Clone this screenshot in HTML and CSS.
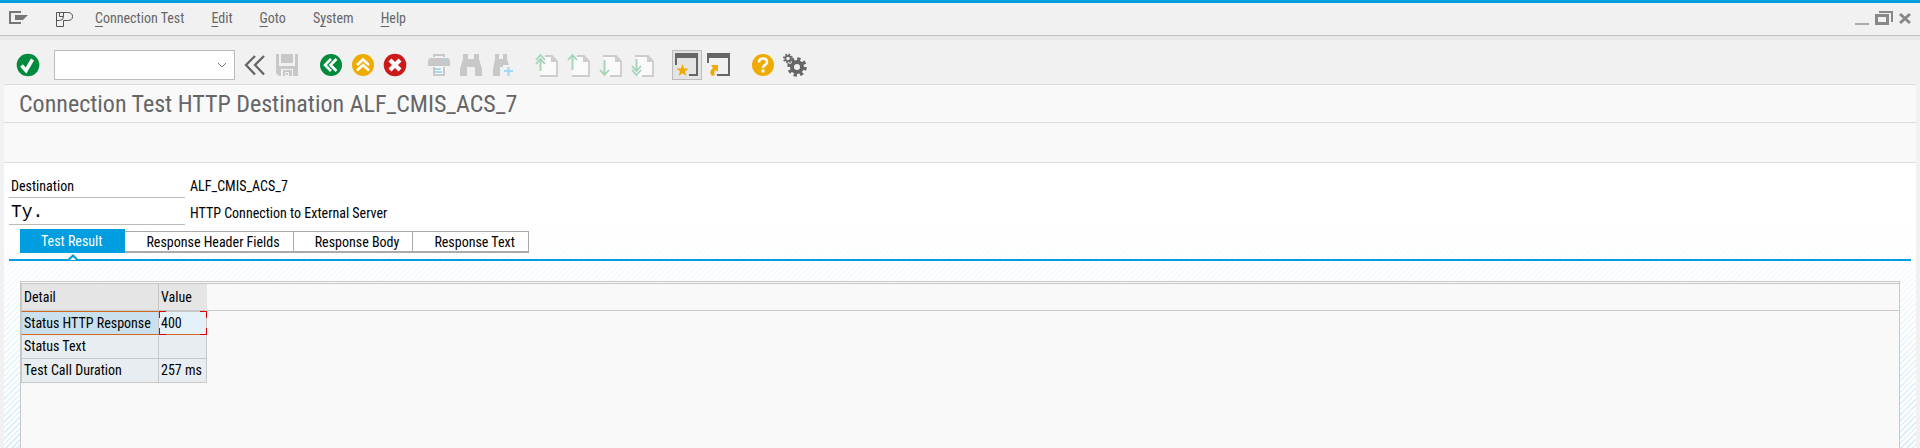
FILE: index.html
```html
<!DOCTYPE html>
<html lang="en">
<head>
<meta charset="utf-8">
<title>Connection Test HTTP Destination ALF_CMIS_ACS_7</title>
<link rel="stylesheet" href="styles.css">
</head>
<body>
<header class="menubar">
  <button class="icon-btn sys" aria-label="Window menu"><svg width="19" height="14" viewBox="0 0 19 14"><path d="M12 1H1v11h11" fill="none" stroke="#777" stroke-width="2"/><path d="M6 4h13l-5 5H6z" fill="#777"/></svg></button>
  <button class="icon-btn app" aria-label="Session"><svg width="18" height="17" viewBox="0 0 18 17"><path d="M.5 1.500h11q5 0 5 4t-5 4h-4v6h-7zM.5 9.500h3q4 0 4-4v-4M3.500 1.500v4h4" fill="none" stroke="#555"/></svg></button>
  <nav class="menus">
    <button class="menu"><u>C</u>onnection Test</button>
    <button class="menu"><u>E</u>dit</button>
    <button class="menu"><u>G</u>oto</button>
    <button class="menu">S<u>y</u>stem</button>
    <button class="menu"><u>H</u>elp</button>
  </nav>
  <div class="window-controls">
    <button class="icon-btn" aria-label="Minimize"><svg width="14" height="14" viewBox="0 0 14 14"><path d="M0 12h14v2H0z" fill="#aaa"/></svg></button>
    <button class="icon-btn" aria-label="Restore"><svg width="18" height="14" viewBox="0 0 18 14"><path d="M4 1h13v10" fill="none" stroke="#888" stroke-width="2"/><path d="M1.500 4.500h11v8h-11z" fill="none" stroke="#888" stroke-width="3"/></svg></button>
    <button class="icon-btn" aria-label="Close"><svg width="12" height="14" viewBox="0 0 12 14"><path d="M1 3l10 9M11 3L1 12" stroke="#888" stroke-width="3"/></svg></button>
  </div>
</header>

<div class="toolbar">
  <div class="group">
    <button class="icon-btn tool" aria-label="Enter"><svg width="24" height="24" viewBox="0 0 24 24"><circle cx="12" cy="12" r="11.300" fill="#008a3b"/><path d="M5.500 12.500l4.500 5 6.500-11" fill="none" stroke="#fff" stroke-width="3.600"/></svg></button>
  </div>
  <div class="command">
    <select class="command-field" aria-label="Command"><option></option></select>
    <svg class="chevron" width="10" height="7" viewBox="0 0 10 7"><path d="M1 1l4 4 4-4" fill="none" stroke="#777"/></svg>
  </div>
  <div class="group">
    <button class="icon-btn tool" aria-label="Collapse"><svg width="24" height="24" viewBox="0 0 24 24"><path d="M12 3L3 12l9 9.500M21 3l-9 9 9 9.500" fill="none" stroke="#666" stroke-width="2.300"/></svg></button>
    <button class="icon-btn tool" aria-label="Save"><svg width="24" height="24" viewBox="0 0 24 24"><path d="M1 1h3v12h16V1h3v22h-5v-7H6v7H4l-3-3z" fill="#c8c8c8"/><path d="M6 1h12v9H6zM8 17h9v6H8z" fill="#c8c8c8"/><path d="M10.500 19.500h3v3h-3z" fill="none" stroke="#f1f1f1"/></svg></button>
  </div>
  <div class="group">
    <button class="icon-btn tool" aria-label="Back"><svg width="24" height="24" viewBox="0 0 24 24"><circle cx="12" cy="12" r="11" fill="#008a3b"/><path d="M12 6l-6 6 6 6M17.500 6l-6 6 6 6" fill="none" stroke="#fff" stroke-width="2.600"/></svg></button>
    <button class="icon-btn tool" aria-label="Exit"><svg width="24" height="24" viewBox="0 0 24 24"><circle cx="12" cy="12" r="11" fill="#f0ab00"/><path d="M6 12l6-5.500 6 5.500M6 17.500l6-5.500 6 5.500" fill="none" stroke="#fff" stroke-width="2.600"/></svg></button>
    <button class="icon-btn tool" aria-label="Cancel"><svg width="24" height="24" viewBox="0 0 24 24"><circle cx="12" cy="12" r="11.300" fill="#cc1919"/><path d="M7 7l10 10M17 7l-10 10" stroke="#fff" stroke-width="4.200"/></svg></button>
  </div>
  <div class="group">
    <button class="icon-btn tool" aria-label="Print" disabled><svg width="24" height="24" viewBox="0 0 24 24"><path d="M7 4V2h10v2" fill="none" stroke="#c8c8c8" stroke-width="2"/><path d="M3 5h18l2 2v6H1V7z" fill="#c8c8c8"/><path d="M18 7h3v2h-3z" fill="#a5d8f3"/><path d="M7 14v8h10v-8" fill="#fafafa" stroke="#c8c8c8" stroke-width="2"/><path d="M8 16h6M8 19h7" stroke="#a5d8f3" stroke-width="2"/></svg></button>
    <button class="icon-btn tool" aria-label="Find" disabled><svg width="24" height="24" viewBox="0 0 24 24"><path d="M4 1h5v5h6V1h5v5l3 10v7h-7v-9H8v9H1v-7L4 6z" fill="#c8c8c8"/></svg></button>
    <button class="icon-btn tool" aria-label="Find next" disabled><svg width="24" height="24" viewBox="0 0 24 24"><path d="M4 1h4v5h4V1h4v5l2 6h-6v2H9v9H2v-7l2-10z" fill="#c8c8c8"/><path d="M13 18h9M17.500 14v9" stroke="#a5d8f3" stroke-width="2.200"/></svg></button>
  </div>
  <div class="group">
    <button class="icon-btn tool" aria-label="First page" disabled><svg width="24" height="24" viewBox="0 0 24 24"><path d="M5 23V13l5-10h7l5 5v15z" fill="#fafafa"/><path d="M10 3h7l5 5v15H5" fill="none" stroke="#ccc" stroke-width="1.800"/><path d="M16 3v6h6z" fill="#ccc"/><path d="M1 7l4.500-5L10 7M1 11l4.500-5 4.500 5M5.500 6v12" fill="none" stroke="#a5d3b8" stroke-width="1.800"/></svg></button>
    <button class="icon-btn tool" aria-label="Previous page" disabled><svg width="24" height="24" viewBox="0 0 24 24"><path d="M5 23V13l5-10h7l5 5v15z" fill="#fafafa"/><path d="M10 3h7l5 5v15H5" fill="none" stroke="#ccc" stroke-width="1.800"/><path d="M16 3v6h6z" fill="#ccc"/><path d="M1 7l4.500-5L10 7M5.500 2v15" fill="none" stroke="#a5d3b8" stroke-width="1.800"/></svg></button>
    <button class="icon-btn tool" aria-label="Next page" disabled><svg width="24" height="24" viewBox="0 0 24 24"><path d="M5 3h12l5 5v15H5z" fill="#fafafa"/><path d="M4 3h13l5 5v15H11" fill="none" stroke="#ccc" stroke-width="1.800"/><path d="M16 3v6h6z" fill="#ccc"/><path d="M1 17l4.500 5L10 17M5.500 7v14" fill="none" stroke="#a5d3b8" stroke-width="1.800"/></svg></button>
    <button class="icon-btn tool" aria-label="Last page" disabled><svg width="24" height="24" viewBox="0 0 24 24"><path d="M5 3h12l5 5v15H5z" fill="#fafafa"/><path d="M4 3h13l5 5v15H11" fill="none" stroke="#ccc" stroke-width="1.800"/><path d="M16 3v6h6z" fill="#ccc"/><path d="M1 17l4.500 5L10 17M1 13l4.500 5L10 13M5.500 6v11" fill="none" stroke="#a5d3b8" stroke-width="1.800"/></svg></button>
  </div>
  <div class="group sessions">
    <button class="icon-btn tool framed" aria-label="New session"><svg width="24" height="24" viewBox="0 0 24 24"><path d="M0 0h23v23h-9v-2h7V5H2v7H0z" fill="#666"/><path d="M7.500 11l1.600 4.400h4.700l-3.800 2.900 1.400 4.700-3.900-2.800L3.600 23 5 18.300l-3.800-2.900h4.700z" fill="#f0ab00"/></svg></button>
    <button class="icon-btn tool" aria-label="Create shortcut"><svg width="24" height="24" viewBox="0 0 24 24"><path d="M0 0h23v23h-13v-2h11V5H2v5H0z" fill="#666"/><path d="M4 12h7v7l-2-2q-3 2-1 5l-3 1q-4-4 1-8z" fill="#f0ab00"/></svg></button>
  </div>
  <div class="group">
    <button class="icon-btn tool" aria-label="Help"><svg width="24" height="24" viewBox="0 0 24 24"><circle cx="12" cy="12" r="11" fill="#f0ab00"/><path d="M8 9.500q0-4 4-4t4 3.500q0 2-2 3t-2 3" fill="none" stroke="#fff" stroke-width="2.600"/><path d="M10.500 16.500h3v3h-3z" fill="#fff"/></svg></button>
    <button class="icon-btn tool" aria-label="Customize layout"><svg width="24" height="24" viewBox="0 0 24 24"><circle cx="14" cy="14" r="5" fill="none" stroke="#666" stroke-width="4"/><circle cx="14" cy="14" r="8" fill="none" stroke="#666" stroke-width="3.500" stroke-dasharray="3.200 3.083"/><circle cx="5" cy="5.500" r="2.600" fill="none" stroke="#666" stroke-width="1.600"/><circle cx="5" cy="5.500" r="4" fill="none" stroke="#666" stroke-width="2" stroke-dasharray="1.600 1.541"/></svg></button>
  </div>
</div>

<main class="screen">
  <h1 class="title">Connection Test HTTP Destination ALF_CMIS_ACS_7</h1>
  <div class="app-toolbar"></div>
  <section class="content">
    <dl class="fields">
      <dt class="label">Destination</dt><dd class="value">ALF_CMIS_ACS_7</dd>
      <dt class="label mono">Ty.</dt><dd class="value">HTTP Connection to External Server</dd>
    </dl>
    <div class="tabs" role="tablist">
      <button class="tab active" role="tab" aria-selected="true">Test Result<svg class="caret" width="12" height="6" viewBox="0 0 12 6"><path d="M0 6l6-6 6 6z" fill="#009de0"/><path d="M3 6l3-3 3 3z" fill="#fff"/></svg></button>
      <button class="tab" role="tab">Response Header Fields</button>
      <button class="tab" role="tab">Response Body</button>
      <button class="tab" role="tab">Response Text</button>
    </div>
    <div class="panel">
      <div class="grid">
        <table class="results">
          <thead><tr><th>Detail</th><th>Value</th><td class="rest"></td></tr></thead>
          <tbody>
            <tr class="selected"><td>Status HTTP Response</td><td class="focus">400</td></tr>
            <tr><td>Status Text</td><td></td></tr>
            <tr><td>Test Call Duration</td><td>257 ms</td></tr>
          </tbody>
        </table>
      </div>
    </div>
  </section>
</main>
</body>
</html>
```
FILE: styles.css
```css
* { box-sizing: border-box; }

body {
  margin: 0;
  min-height: 100vh;
  display: flex;
  flex-direction: column;
  background: #f1f1f1;
  color: #000;
  font: 14px/20px "Arial Narrow", "Roboto Condensed", "Liberation Sans", sans-serif;
}

button, select {
  margin: 0;
  padding: 0;
  border: 0;
  background: none;
  color: inherit;
  font: inherit;
}

svg { display: block; }

.menubar {
  display: flex;
  align-items: center;
  height: 36px;
  padding: 0 9px;
  border-top: 3px solid #009de0;
  border-bottom: 1px solid #bfbfbf;
  color: #666;
}
.sys { padding-bottom: 2px; }
.app { margin-left: 28px; }
.menus { display: flex; gap: 27px; margin-left: 21px; padding-bottom: 2px; }
.menu u { text-underline-offset: 3px; }
.window-controls { display: flex; gap: 6px; margin-left: auto; padding-bottom: 3px; }

.toolbar {
  display: flex;
  align-items: center;
  gap: 20px;
  height: 48px;
  padding: 6px 16px 0;
  border-top: 4px solid #e9e9e9;
}
.group { display: flex; align-items: center; gap: 8px; }
.command { display: grid; align-items: center; width: 181px; margin: 0 -12px 0 -6px; }
.command-field {
  grid-area: 1 / 1;
  width: 100%;
  height: 30px;
  border: 1px solid #bbb;
  background: #fff;
  appearance: none;
}
.chevron { grid-area: 1 / 1; justify-self: end; margin-right: 8px; pointer-events: none; }
.sessions { gap: 5px; margin-left: -3px; }
.framed { padding: 2px; border: 1px solid #bbb; background: #e4e4e4; }

.screen {
  display: flex;
  flex: 1;
  flex-direction: column;
  margin: 0 4px;
  border-top: 1px solid #dcdcdc;
  background: #f9f9f9;
}
.title {
  margin: 0;
  padding: 5px 15px 4px;
  border-bottom: 1px solid #dcdcdc;
  color: #666;
  font-size: 24px;
  font-weight: 400;
  line-height: 28px;
}
.app-toolbar { height: 40px; border-bottom: 1px solid #dcdcdc; }

.content {
  display: flex;
  flex: 1;
  flex-direction: column;
  padding: 8px 5px 0;
  background:
    linear-gradient(#fff 0, #fff 20%, transparent 110%),
    repeating-linear-gradient(135deg, #fff 0 2px, #d9edf8 2px 4px);
}
.fields {
  display: grid;
  grid-template-columns: 176px 1fr;
  column-gap: 5px;
  margin: 0;
}
.label { height: 27px; padding: 5px 2px 1px; border-bottom: 1px solid #bbb; }
.value { margin: 0; padding-top: 5px; }
.mono { font-family: "Liberation Mono", monospace; font-size: 18px; padding-top: 4px; }

.tabs {
  display: flex;
  align-items: flex-end;
  padding: 4px 11px 6px;
  border-bottom: 2px solid #009de0;
}
.tab {
  height: 22px;
  padding: 0 13px 0 21px;
  border: 1px solid #aaa;
  border-left: 0;
  border-bottom-width: 2px;
  background: #fff;
}
.active {
  position: relative;
  height: 24px;
  padding-right: 23px;
  border: 0;
  background: #009de0;
  color: #fff;
}
.caret { position: absolute; bottom: -7px; left: 47px; }

.panel { display: flex; flex: 1; padding: 20px 11px 0; }
.grid {
  flex: 1;
  border: 1px solid #c8c8c8;
  border-bottom: 0;
  background: #f9f9f9;
}
.results {
  width: 100%;
  margin-top: 1px;
  border-top: 1px solid #c8c8c8;
  border-collapse: separate;
  border-spacing: 0;
}
.results th, .results td {
  height: 24px;
  padding: 0 2px 1px;
  border-right: 1px solid #c8c8c8;
  border-bottom: 1px solid #c8c8c8;
  background: #e8edf1;
  font-weight: 400;
  text-align: left;
  white-space: nowrap;
}
.results th { height: 27px; background: #e5e5e5; }
.results th:first-child, .results td:first-child { width: 138px; border-left: 1px solid #c8c8c8; }
.results th:nth-child(2), .results td:nth-child(2) { width: 48px; }
.results th:nth-child(2) { border-right-color: #e5e5e5; }
.results .rest { border-right: 0; background: none; }
.results .selected td { border-top: 1px solid #d2691e; border-bottom-color: #d2691e; background: #c9e0ee; }
.results .selected .focus {
  border: 0;
  background:
    linear-gradient(#d00, #d00) 0 0 / 7px 1px,
    linear-gradient(#d00, #d00) 0 0 / 1px 7px,
    linear-gradient(#d00, #d00) 100% 0 / 7px 1px,
    linear-gradient(#d00, #d00) 100% 0 / 1px 7px,
    linear-gradient(#d00, #d00) 0 100% / 7px 1px,
    linear-gradient(#d00, #d00) 0 100% / 1px 7px,
    linear-gradient(#d00, #d00) 100% 100% / 7px 1px,
    linear-gradient(#d00, #d00) 100% 100% / 1px 7px,
    linear-gradient(#d2691e, #d2691e) 0 100% / 100% 1px,
    linear-gradient(#c8c8c8, #c8c8c8) 0 0 / 100% 1px,
    linear-gradient(#c8c8c8, #c8c8c8) 100% 0 / 1px 100%,
    #e5f1f9;
  background-repeat: no-repeat;
}
```
